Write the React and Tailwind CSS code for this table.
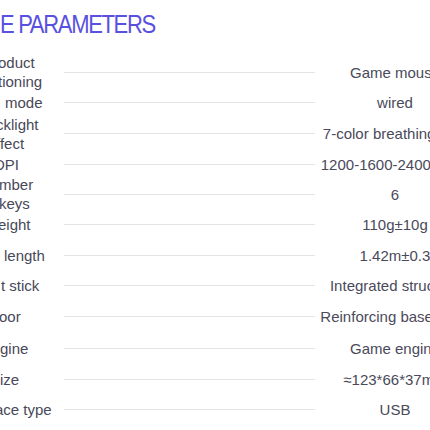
import React from "react";

const rows = [
  { h: "h-[30px]", label: ["oduct", "tioning"], ml: "ml-[-2px]", value: "Game mouse" },
  { h: "h-[31px]", label: ["mode"], ml: "ml-[5px]", value: "wired" },
  { h: "h-[31px]", label: ["cklight", "ffect"], ml: "ml-[-4px]", value: "7-color breathing light" },
  { h: "h-[30px]", label: ["DPI"], ml: "ml-[-6px]", value: "1200-1600-2400-3200" },
  { h: "h-[30px]", label: ["mber", "keys"], ml: "ml-[-1px]", value: "6" },
  { h: "h-[31px]", label: ["eight"], ml: "ml-[-2px]", value: "110g±10g" },
  { h: "h-[30px]", label: ["length"], ml: "ml-[4px]", value: "1.42m±0.3" },
  { h: "h-[31px]", label: ["t stick"], ml: "ml-[1px]", value: "Integrated structure" },
  { h: "h-[31px]", label: ["oor"], ml: "ml-[-1px]", value: "Reinforcing base plate" },
  { h: "h-[32px]", label: ["gine"], ml: "ml-[0px]", value: "Game engine" },
  { h: "h-[31px]", label: ["ize"], ml: "ml-[0px]", value: "≈123*66*37mm" },
  { h: "h-[29px]", label: ["ace type"], ml: "ml-[-5px]", value: "USB" },
];

export default function App() {
  return (
    <div className="w-[430px] h-[430px] overflow-hidden bg-white font-['Liberation_Sans',Arial,sans-serif]">
      <div className="h-[57px] pt-[12px]">
        <div className="block origin-left scale-x-[0.88] tracking-[-1.5px] text-[25px] leading-[25px] text-[#5a50e0] whitespace-nowrap">
          E PARAMETERS
        </div>
      </div>
      <div className="flex flex-col">
        {rows.map((r, i) => (
          <div key={i} className={`flex items-center ${r.h}`}>
            <div className="w-[64px] shrink-0 overflow-hidden">
              <div className={`text-[15px] leading-[19px] text-[#484858] whitespace-nowrap ${r.ml}`}>
                {r.label.map((l, j) => (
                  <div key={j}>{l}</div>
                ))}
              </div>
            </div>
            <div className="w-[251px] shrink-0 h-px bg-[#e4e4e8]" />
            <div className="w-[160px] shrink-0 text-center text-[15px] leading-[19px] text-[#4a4a5a] whitespace-nowrap">
              {r.value}
            </div>
          </div>
        ))}
      </div>
    </div>
  );
}
